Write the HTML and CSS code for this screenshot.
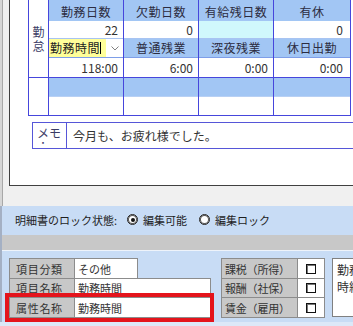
FILE: index.html
```html
<!DOCTYPE html>
<html lang="ja">
<head>
<meta charset="utf-8">
<link rel="stylesheet" href="styles.css">
</head>
<body>
<div class="screen">
  <div class="top-area">
    <div class="panel">
      <div class="kintai">
        <div class="c side1">勤怠</div>
        <div class="c side2"></div>
        <div class="c h r1">勤務日数</div>
        <div class="c h r1">欠勤日数</div>
        <div class="c h r1">有給残日数</div>
        <div class="c h r1">有休</div>
        <div class="c n r2">22</div>
        <div class="c n r2">0</div>
        <div class="c cyan r2"></div>
        <div class="c n r2 last">0</div>
        <div class="c sel r3">
          <div class="sel-text">勤務時間<span class="caret"></span></div>
          <div class="sel-btn"><svg width="8" height="5" viewBox="0 0 8 5"><polyline points="0.5,0.5 4,4 7.5,0.5" fill="none" stroke="#808080" stroke-width="1"/></svg></div>
        </div>
        <div class="c h r3">普通残業</div>
        <div class="c h r3">深夜残業</div>
        <div class="c h r3">休日出勤</div>
        <div class="c n r4">118:00</div>
        <div class="c n r4">6:00</div>
        <div class="c n r4">0:00</div>
        <div class="c n r4 last">0:00</div>
        <div class="c r5"></div>
        <div class="c r5"></div>
        <div class="c r5"></div>
        <div class="c r5"></div>
        <div class="c r6"></div>
        <div class="c r6"></div>
        <div class="c r6"></div>
        <div class="c r6"></div>
      </div>
      <div class="memo">
        <div class="memo-label">メモ<br>：</div>
        <div class="memo-text">今月も、お疲れ様でした。</div>
      </div>
    </div>
  </div>
  <div class="lower">
    <div class="lock-bar">
      <span>明細書のロック状態:</span>
      <span class="radio on"></span><span class="radio-text">編集可能</span>
      <span class="radio second"></span><span class="radio-text">編集ロック</span>
    </div>
    <div class="gray-bar"></div>
    <div class="detail">
      <div class="attr">
        <div class="arow ra"><div class="alab">項目分類</div><div class="aval short">その他</div></div>
        <div class="arow rb"><div class="alab">項目名称</div><div class="aval long">勤務時間</div></div>
        <div class="arow rc"><div class="alab">属性名称</div><div class="aval long">勤務時間</div></div>
      </div>
      <div class="flags">
        <div class="frow ra"><div class="flab">課税（所得）</div><div class="fchk"><span class="box"></span></div></div>
        <div class="frow rb"><div class="flab">報酬（社保）</div><div class="fchk"><span class="box"></span></div></div>
        <div class="frow rc"><div class="flab">賃金（雇用）</div><div class="fchk"><span class="box"></span></div></div>
      </div>
      <div class="textbox">勤務時間の<br>時給単価</div>
    </div>
  </div>
  <div class="highlight"></div>
</div>
</body>
</html>
```
FILE: styles.css
```css
* { box-sizing: border-box; }
html, body { margin: 0; padding: 0; }
body {
  width: 353px;
  height: 326px;
  overflow: hidden;
  background: #dce8f8;
  font-family: "Noto Sans CJK JP", sans-serif;
  color: #333;
}
.screen { position: relative; width: 353px; height: 326px; overflow: hidden; }

.top-area {
  height: 206px;
  padding-left: 9px;
  background: linear-gradient(to right, #d6d6d6 0 2px, #a8a8a8 2px 3px, #f0f0f0 3px);
}
.panel {
  height: 186px;
  background: #fff;
  border-left: 1px solid #404040;
  border-bottom: 1px solid #404040;
  overflow: hidden;
}

.kintai {
  display: grid;
  grid-template-columns: 19px 74px 74px 74px 76px;
  grid-template-rows: 21px 18px 19px 20px 19px 18px;
  column-gap: 1px;
  width: 323px;
  height: 117px;
  margin: -1px 0 0 18px;
  background: #4646dc;
  border: 1px solid #4646dc;
}
.c {
  background: #fff;
  display: flex;
  align-items: center;
  font-size: 12px;
  line-height: 14px;
  color: #333;
  white-space: nowrap;
}
.h {
  background: #a2c6f4;
  justify-content: center;
  letter-spacing: 0.5px;
  color: #2c2c40;
}
.r1 { border-bottom: 1px solid #a2c6f4; align-items: flex-start; padding-top: 5px; }
.r2 { border-bottom: 1px solid #a8c4f2; }
.r3 { border-bottom: 1px solid #7e9ee8; }
.r4 { border-bottom: 1px solid #4646dc; }
.r5 { background: #a2c6f4; border-bottom: 1px solid #b8d0f4; }
.n { justify-content: flex-end; padding-right: 5px; }
.n.last { padding-right: 7px; }
.cyan { background: #d0f8fc; }
.side1 {
  grid-column: 1;
  grid-row: 1 / 5;
  border-bottom: 1px solid #4646dc;
  justify-content: center;
  text-align: center;
  white-space: normal;
  padding: 0 3px;
  color: #3c3c66;
}
.side2 { grid-column: 1; grid-row: 5 / 7; }

.sel { padding: 0; align-items: stretch; }
.sel-text {
  width: 57px;
  background: #ffff99;
  display: flex;
  align-items: center;
  padding-left: 1px;
  letter-spacing: 0.5px;
  color: #222;
}
.caret { display: inline-block; width: 1px; height: 12px; background: #000; }
.sel-btn { width: 17px; display: flex; align-items: center; justify-content: center; padding-top: 1px; }

.memo {
  display: flex;
  width: 340px;
  height: 27px;
  margin: 6px 0 0 22px;
  border: 1px solid #5656d8;
  border-right: none;
}
.memo-label {
  width: 34px;
  border-right: 1px solid #5656d8;
  padding: 3px 0 0 4px;
  font-size: 12px;
  line-height: 13px;
  overflow: hidden;
  color: #3c3c66;
}
.memo-text {
  padding-left: 6px;
  display: flex;
  align-items: center;
  font-size: 12px;
  color: #333;
}

.lower { border-left: 2px solid #a4b0c4; }
.lock-bar {
  height: 29px;
  background: #c8dcf5;
  display: flex;
  align-items: center;
  padding: 0 0 2px 13px;
  font-size: 11px;
  color: #1e1e1e;
}
.radio {
  width: 11px;
  height: 11px;
  border: 1px solid #222;
  box-shadow: inset 0 0 0 1px #555;
  border-radius: 50%;
  background: #fff;
  display: flex;
  align-items: center;
  justify-content: center;
  margin-left: 10px;
}
.radio.second { margin-left: 12px; }
.radio.on::after {
  content: "";
  width: 4px;
  height: 4px;
  border-radius: 50%;
  background: #111;
}
.radio-text { margin-left: 5px; }

.gray-bar { height: 16px; background: #c8c8c8; border-bottom: 1px solid #eef3fa; }

.detail {
  height: 71px;
  background: #c8dcf5;
  padding: 7px 0 0 7px;
  display: flex;
  align-items: flex-start;
  overflow: hidden;
}
.attr { width: 202px; flex-shrink: 0; }
.arow, .frow { display: flex; }
.arow + .arow, .frow + .frow { margin-top: -1px; }
.ra { height: 21px; }
.rb { height: 20px; }
.rc { height: 21px; }
.alab {
  width: 66px;
  background: #c8c8c8;
  border: 1px solid #8c8c8c;
  padding-left: 6px;
  display: flex;
  align-items: center;
  font-size: 11px;
  letter-spacing: 0.7px;
  color: #333;
}
.aval {
  margin-left: -1px;
  background: #fff;
  border: 1px solid #8c8c8c;
  padding-left: 3px;
  display: flex;
  align-items: center;
  font-size: 11px;
  color: #333;
}
.aval.short { width: 64px; }
.aval.long { width: 137px; }

.flags { width: 104px; margin-left: 10px; flex-shrink: 0; }
.flab {
  width: 77px;
  background: #c8c8c8;
  border: 1px solid #8c8c8c;
  padding-left: 3px;
  display: flex;
  align-items: center;
  font-size: 11px;
  letter-spacing: -0.2px;
  color: #333;
  white-space: nowrap;
}
.fchk {
  width: 28px;
  margin-left: -1px;
  background: #fff;
  border: 1px solid #8c8c8c;
  display: flex;
  align-items: center;
  justify-content: center;
}
.box { width: 10px; height: 10px; border: 1px solid #111; box-shadow: inset 1px 1px 0 #777; background: #fff; }

.textbox {
  width: 60px;
  height: 59px;
  margin-left: 7px;
  flex-shrink: 0;
  background: #fff;
  border: 1px solid #808080;
  padding: 2px 0 0 4px;
  font-size: 12px;
  line-height: 17px;
  white-space: nowrap;
  overflow: hidden;
  color: #333;
}

.highlight {
  position: absolute;
  left: 5px;
  top: 293px;
  width: 209px;
  height: 29px;
  border: 4px solid #e4141c;
}
```
